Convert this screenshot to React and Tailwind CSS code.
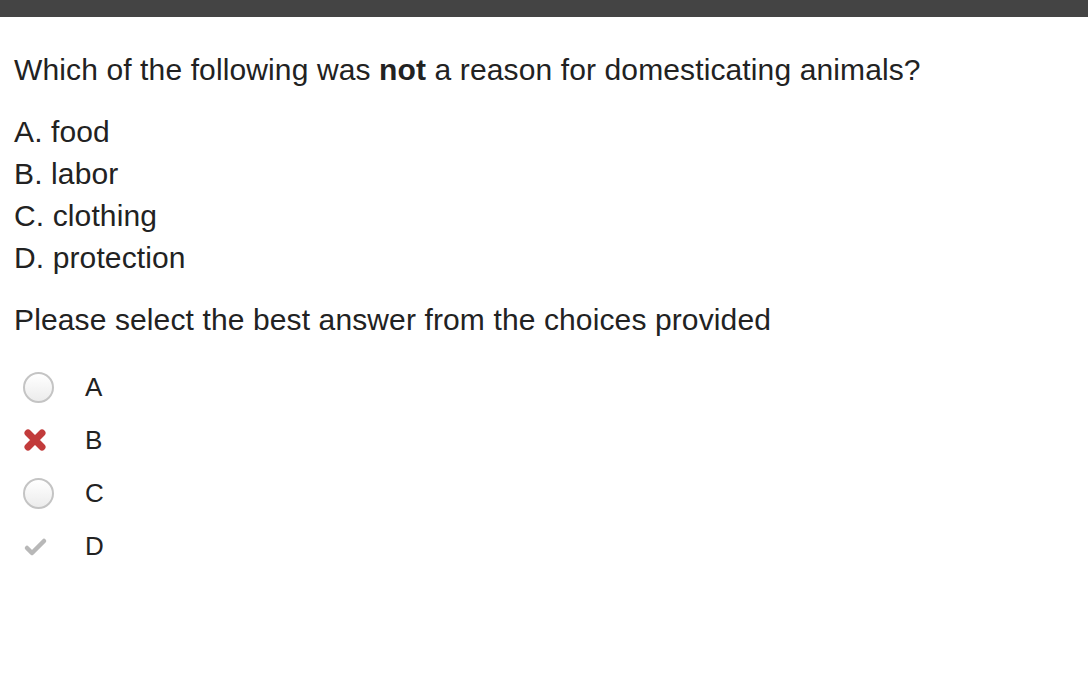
export default function App() {
  const choices = [
    { letter: "A", state: "radio" },
    { letter: "B", state: "wrong" },
    { letter: "C", state: "radio" },
    { letter: "D", state: "right" },
  ];

  return (
    <div className="w-[1088px] h-[676px] bg-white text-[#222] font-['Liberation_Sans',Arial,sans-serif] overflow-hidden">
      <div className="h-[17px] bg-[#444444]" />
      <div className="pl-[14px] pt-[36px] tracking-[0.12px]">
        <p className="text-[30px] leading-[34px]">
          Which of the following was <b>not</b> a reason for domesticating animals?
        </p>
        <div className="mt-[24px] text-[30px] leading-[42px]">
          <div>A. food</div>
          <div>B. labor</div>
          <div>C. clothing</div>
          <div>D. protection</div>
        </div>
        <p className="mt-[24px] text-[30px] leading-[34px]">Please select the best answer from the choices provided</p>
        <div className="mt-[35px] flex flex-col gap-[23px]">
          {choices.map((c) => (
            <div key={c.letter} className="flex items-center h-[30px]">
              <div className="w-[48px] flex justify-center">
                {c.state === "radio" && (
                  <div className="w-[31px] h-[31px] rounded-full border-2 border-[#c4c4c4] bg-gradient-to-b from-white to-[#ececec]" />
                )}
                {c.state === "wrong" && (
                  <svg width="26" height="26" viewBox="0 0 26 26" className="-ml-[6px]">
                    <path d="M6 6 L20 20 M20 6 L6 20" stroke="#c23b3b" strokeWidth="7" strokeLinecap="round" />
                  </svg>
                )}
                {c.state === "right" && (
                  <svg width="28" height="26" viewBox="0 0 28 26" className="-ml-[6px]">
                    <path d="M6 15 L11 20 L23 8" stroke="#b8b8b8" strokeWidth="4.5" fill="none" strokeLinecap="round" strokeLinejoin="round" />
                  </svg>
                )}
              </div>
              <span className="ml-[23px] text-[26px]">{c.letter}</span>
            </div>
          ))}
        </div>
      </div>
    </div>
  );
}
